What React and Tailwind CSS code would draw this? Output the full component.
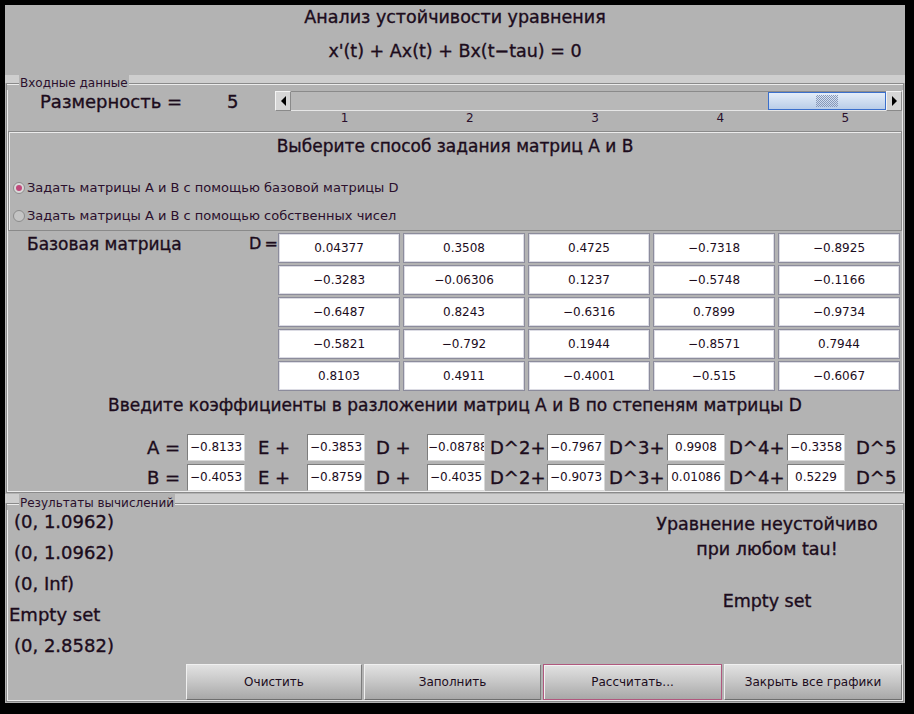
import clsx from "clsx";

const D = [
  ["0.04377", "0.3508", "0.4725", "−0.7318", "−0.8925"],
  ["−0.3283", "−0.06306", "0.1237", "−0.5748", "−0.1166"],
  ["−0.6487", "0.8243", "−0.6316", "0.7899", "−0.9734"],
  ["−0.5821", "−0.792", "0.1944", "−0.8571", "0.7944"],
  ["0.8103", "0.4911", "−0.4001", "−0.515", "−0.6067"],
];

const COEF = [
  { name: "A =", values: ["−0.8133", "−0.3853", "−0.08788", "−0.7967", "0.9908", "−0.3358"] },
  { name: "B =", values: ["−0.4053", "−0.8759", "−0.4035", "−0.9073", "0.01086", "0.5229"] },
];

// labels that follow each input box, with their left padding
const TERMS = [
  { t: "E +", pl: "pl-[13px]" },
  { t: "D +", pl: "pl-[11px]" },
  { t: "D^2+", pl: "pl-[5px]" },
  { t: "D^3+", pl: "pl-[4px]" },
  { t: "D^4+", pl: "pl-[4px]" },
  { t: "D^5", pl: "pl-[11px]" },
];

const RESULTS = ["(0, 1.0962)", "(0, 1.0962)", "(0, Inf)", "Empty set", "(0, 2.8582)"];

const HEAVY = "[-webkit-text-stroke:0.35px]";

function Seg({ side, band }) {
  return (
    <div className={clsx("flex flex-col", side === "l" ? "w-[14px]" : "flex-1")}>
      <div className={clsx("bg-[#cecece]", band)} />
      <div
        className={clsx(
          "flex-1 border-t border-[#8a8a8a] shadow-[inset_0_1px_0_#ececec]",
          side === "l" ? "ml-px border-l" : "mr-px border-r"
        )}
      />
    </div>
  );
}

function Legend({ label, band, h, pt }) {
  return (
    <div className={clsx("flex", h)}>
      <Seg side="l" band={band} />
      <span className={clsx("bg-[#b3b3b3] px-px text-[12px] leading-[14px] text-[#2a0f2c]", pt)}>{label}</span>
      <Seg side="r" band={band} />
    </div>
  );
}

function Button({ children, focused }) {
  return (
    <div
      className={clsx(
        "flex h-[36px] items-center justify-center border bg-gradient-to-b from-[#e2e2e2] via-[#c6c6c6] to-[#a8a8a8] text-[12px] text-[#1c0c1c]",
        focused
          ? "border-[#b0587e] shadow-[inset_1px_1px_0_#f2f2f2]"
          : "border-[#f0f0f0] border-r-[#7c7c7c] border-b-[#6e6e6e]"
      )}
    >
      {children}
    </div>
  );
}

export default function App() {
  return (
    <div className="h-[714px] w-[914px] bg-black pl-[5px] pt-[5px] font-['DejaVu_Sans',sans-serif] text-[#1c0c1c]">
      <div className="flex h-[698px] w-[900px] flex-col bg-[#b3b3b3]">
        {/* header */}
        <div className={clsx("flex h-[70px] flex-col items-center pt-[2px] text-[17.5px] leading-[20px]", HEAVY)}>
          <div>Анализ устойчивости уравнения</div>
          <div className="mt-[14px]">x'(t) + Ax(t) + Bx(t−tau) = 0</div>
        </div>

        <Legend label="Входные данные" band="h-[8px]" h="h-[15px]" pt="pt-[1px]" />

        {/* input data */}
        <div className="mx-px flex h-[403px] flex-col border-x border-b border-[#8a8a8a] shadow-[inset_1px_0_0_#ececec,inset_-1px_0_0_#ececec,inset_0_-1px_0_#ececec]">
          <div className="mt-px flex h-[20px] items-center pl-[33px]">
            <span className={clsx("w-[187px] shrink-0 whitespace-nowrap text-[18px]", HEAVY)}>Размерность =</span>
            <span className={clsx("text-[18px]", HEAVY)}>5</span>
            <div className="ml-auto mr-px flex h-[20px] w-[627px]">
              <div className="flex w-[16px] items-center justify-center border border-[#f4f4f4] border-r-[#8a8a8a] border-b-[#8a8a8a] bg-[#d6d6d6]">
                <div className="h-0 w-0 border-y-[5px] border-r-[5px] border-y-transparent border-r-black" />
              </div>
              <div className="flex flex-1 justify-end border-y border-t-[#8a8a8a] border-b-[#e6e6e6] bg-[#b8b8b8]">
                <div className="flex w-[118px] items-center justify-center border border-[#3a6fcc] bg-gradient-to-b from-[#e4edf8] to-[#b9cde8]">
                  <div className="h-[12px] w-[22px] bg-[repeating-conic-gradient(#8898b8_0_25%,transparent_0_50%)] bg-[length:2px_2px]" />
                </div>
              </div>
              <div className="flex w-[16px] items-center justify-center border border-[#f4f4f4] border-r-[#8a8a8a] border-b-[#8a8a8a] bg-[#d6d6d6]">
                <div className="h-0 w-0 border-y-[5px] border-l-[5px] border-y-transparent border-l-black" />
              </div>
            </div>
          </div>
          <div className="ml-[275px] mt-px grid h-[13px] w-[626px] grid-cols-5 text-center text-[12px] leading-[13px] text-[#2a0f2c]">
            {[1, 2, 3, 4, 5].map((n) => (
              <span key={n}>{n}</span>
            ))}
          </div>

          {/* method choice */}
          <div className="mx-px mt-[6px] flex h-[100px] flex-col border border-[#8a8a8a] shadow-[inset_1px_1px_0_#ececec]">
            <div className={clsx("pt-[4px] text-center text-[17px] leading-[20px]", HEAVY)}>
              Выберите способ задания матриц A и B
            </div>
            <div className="mt-[24px] flex h-[16px] items-center pl-[4px] text-[13px] text-[#2a0f2c]">
              <div className="mr-[2px] flex h-[12px] w-[12px] items-center justify-center rounded-full border border-[#8c8c8c] bg-[#d8d8d8]">
                <div className="h-[6px] w-[6px] rounded-full bg-[#c0487a]" />
              </div>
              Задать матрицы A и B с помощью базовой матрицы D
            </div>
            <div className="mt-[12px] flex h-[16px] items-center pl-[4px] text-[13px] text-[#2a0f2c]">
              <div className="mr-[2px] h-[12px] w-[12px] rounded-full border border-[#8c8c8c] bg-[#c4c4c4]" />
              Задать матрицы A и B с помощью собственных чисел
            </div>
          </div>

          {/* base matrix */}
          <div className="mt-[2px] flex pl-[20px]">
            <span className={clsx("w-[222px] shrink-0 whitespace-nowrap text-[17px] leading-[22px]", HEAVY)}>
              Базовая матрица
            </span>
            <span className={clsx("w-[29px] shrink-0 whitespace-nowrap text-[16px] leading-[22px] tracking-[-1px]", HEAVY)}>
              D =
            </span>
            <div className="grid w-[622px] shrink-0 grid-cols-5 gap-x-[3px] gap-y-[2px]">
              {D.flat().map((v, i) => (
                <div
                  key={i}
                  className="flex h-[30px] items-center justify-center border border-[#8c8c9c] bg-white text-[12px] shadow-[inset_0_0_0_1px_#dcdce4]"
                >
                  {v}
                </div>
              ))}
            </div>
          </div>

          <div className={clsx("mt-[4px] h-[20px] text-center text-[17px] leading-[20px]", HEAVY)}>
            Введите коэффициенты в разложении матриц A и B по степеням матрицы D
          </div>

          {/* coefficients */}
          <div className="mt-[19px] flex flex-col gap-[3px]">
            {COEF.map((row) => (
              <div key={row.name} className="flex h-[27px] items-center pl-[140px]">
                <span className={clsx("w-[40px] shrink-0 whitespace-nowrap text-[18px]", HEAVY)}>{row.name}</span>
                {row.values.map((v, i) => (
                  <div key={i} className="flex shrink-0 items-center">
                    <div className="h-[27px] w-[58px] overflow-hidden whitespace-nowrap border border-[#7c7c7c] border-r-[#d8d8d8] border-b-[#d8d8d8] bg-white text-center text-[12px] leading-[25px]">
                      {v}
                    </div>
                    <span className={clsx("w-[62px] whitespace-nowrap text-[18px]", HEAVY, TERMS[i].pl)}>
                      {TERMS[i].t}
                    </span>
                  </div>
                ))}
              </div>
            ))}
          </div>
        </div>

        <div className="mt-px">
          <Legend label="Результаты вычислений" band="h-[9px]" h="h-[16px]" pt="pt-[2px]" />
        </div>

        {/* results */}
        <div className="mx-px flex h-[192px] flex-col border-x border-b border-[#8a8a8a] shadow-[inset_1px_0_0_#ececec,inset_-1px_0_0_#ececec,inset_0_-1px_0_#ececec]">
          <div className="flex">
            <div className={clsx("flex flex-col gap-[9px] pt-px text-[18px] leading-[22px]", HEAVY)}>
              {RESULTS.map((r, i) => (
                <span key={i} className={r === "Empty set" ? "pl-[2px]" : "pl-[7px]"}>
                  {r}
                </span>
              ))}
            </div>
            <div className={clsx("ml-auto mr-[6px] flex w-[260px] flex-col items-center pt-[2px] text-[17.5px] leading-[24px]", HEAVY)}>
              <span>Уравнение неустойчиво</span>
              <span className="mt-px">при любом tau!</span>
              <span className="mt-[28px]">Empty set</span>
            </div>
          </div>
          <div className="mb-px mr-px mt-auto flex justify-end gap-[2px]">
            <div className="w-[176px]"><Button>Очистить</Button></div>
            <div className="w-[177px]"><Button>Заполнить</Button></div>
            <div className="w-[179px]"><Button focused>Рассчитать...</Button></div>
            <div className="w-[178px]"><Button>Закрыть все графики</Button></div>
          </div>
        </div>
      </div>
    </div>
  );
}
